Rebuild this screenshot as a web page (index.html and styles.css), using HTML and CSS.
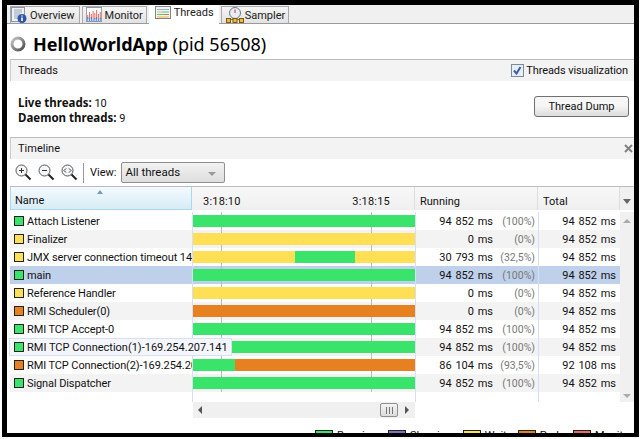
FILE: index.html
```html
<!DOCTYPE html>
<html>

<head>
    <meta charset="utf-8">
    <title>HelloWorldApp - Threads</title>
    <link rel="stylesheet" href="styles.css">
</head>

<body>
<div class="frame">
    <div class="tabs">
        <div class="tab">
            <svg width="16" height="16" viewBox="0 0 16 16"><rect x="0.5" y="0.5" width="13" height="14" fill="#eef1f5" stroke="#8d99a8"/><path d="M3 3h8M3 5h8M3 7h6M3 9h4M3 11h4" stroke="#9aa6b5"/><circle cx="11" cy="11.5" r="4.5" fill="#2f55a8"/><path d="M11 8.5v1M11 10.5v3.5" stroke="#fff" stroke-width="1.6"/></svg>
            Overview
        </div>
        <div class="tab">
            <svg width="16" height="16" viewBox="0 0 18 16" preserveAspectRatio="none"><rect x="0.5" y="0.5" width="17" height="14" fill="#fff" stroke="#8d99a8"/><path d="M2 12V8M4 12V5M6 12V7M8 12V4M10 12V6M12 12V3M14 12V7M16 12V5" stroke="#e0605a"/><path d="M2 14v-4M4 14v-3M6 14v-4M8 14v-2M10 14v-3M12 14v-4M14 14v-2M16 14v-3" stroke="#3f78d0"/></svg>
            Monitor
        </div>
        <div class="tab tab-active">
            <svg width="16" height="14" viewBox="0 0 16 14"><rect x="0.5" y="0.5" width="15" height="12" fill="#f4f4f4" stroke="#7c8590"/><path d="M2 3.5h12" stroke="#8fb3d9"/><path d="M2 6h5" stroke="#e9b13c"/><path d="M7 6h7" stroke="#58c46c"/><path d="M2 8.500h7" stroke="#58c46c"/><path d="M9 8.500h5" stroke="#d9773a"/><path d="M2 11h12" stroke="#e9b13c"/></svg>
            Threads
        </div>
        <div class="tab tab-sampler">
            <svg width="18" height="16" viewBox="0 0 18 16"><circle cx="9" cy="6" r="5.500" fill="#e8edf2" stroke="#6d7680"/><path d="M9 2.500V6" stroke="#c33" stroke-width="1"/><path d="M1 12.500h16" stroke="#8a6a1c"/><rect x="0.500" y="11.500" width="4" height="4" fill="#f0b840" stroke="#7a5a10"/><rect x="7" y="11.500" width="4" height="4" fill="#f0b840" stroke="#7a5a10"/><rect x="13.500" y="11.500" width="4" height="4" fill="#f0b840" stroke="#7a5a10"/></svg>
            Sampler
        </div>
    </div>

    <div class="title">
        <svg width="16" height="16" viewBox="0 0 16 16"><defs><linearGradient id="ring" x1="0" y1="0" x2="1" y2="1"><stop offset="0" stop-color="#c9c9c9"/><stop offset="1" stop-color="#4a4a4a"/></linearGradient></defs><circle cx="8" cy="8" r="6" fill="none" stroke="url(#ring)" stroke-width="3"/></svg>
        <h1><b>HelloWorldApp</b> (pid 56508)</h1>
    </div>

    <div class="section-head">
        <span>Threads</span>
        <label class="viz">
            <svg width="13" height="13" viewBox="0 0 13 13"><rect x="0.500" y="0.500" width="12" height="12" fill="#e8eef6" stroke="#7f8a96"/><path d="M3 6.500l2.500 3L9.500 3" fill="none" stroke="#3b5fa8" stroke-width="2"/></svg>
            Threads visualization
        </label>
    </div>

    <div class="info">
        <div class="counts">
            <div><b>Live threads:</b> 10</div>
            <div><b>Daemon threads:</b> 9</div>
        </div>
        <button class="dump">Thread Dump</button>
    </div>

    <div class="section-head timeline-head">
        <span>Timeline</span>
        <svg width="9" height="9" viewBox="0 0 9 9"><path d="M1 1l7 7M8 1L1 8" stroke="#808080" stroke-width="2"/></svg>
    </div>

    <div class="toolbar">
        <svg class="zoom" width="17" height="17" viewBox="0 0 17 17"><circle cx="6.500" cy="6.500" r="5.500" fill="#f4f6f8" stroke="#555"/><path d="M4 6.500h5M6.500 4v5" stroke="#333"/><path d="M10.500 10.500l5 5" stroke="#222" stroke-width="2"/></svg>
        <svg class="zoom" width="17" height="17" viewBox="0 0 17 17"><circle cx="6.500" cy="6.500" r="5.500" fill="#f4f6f8" stroke="#555"/><path d="M4 6.500h5" stroke="#333"/><path d="M10.500 10.500l5 5" stroke="#222" stroke-width="2"/></svg>
        <svg class="zoom" width="17" height="17" viewBox="0 0 17 17"><circle cx="6.500" cy="6.500" r="5.500" fill="#f4f6f8" stroke="#555"/><path d="M5 4.500l-2 2 2 2M8 4.500l2 2-2 2" fill="none" stroke="#333"/><path d="M10.500 10.500l5 5" stroke="#222" stroke-width="2"/></svg>
        <span class="sep"></span>
        <span class="view-label">View:</span>
        <div class="combo">All threads<span class="combo-arrow"></span></div>
    </div>

    <div class="table-head">
        <div class="th th-name"><span class="sort"></span>Name</div>
        <div class="th th-time"><span>3:18:10</span><span>3:18:15</span></div>
        <div class="th">Running</div>
        <div class="th">Total</div>
        <div class="th th-corner"><span class="corner-arrow"></span></div>
    </div>

    <div class="table-body">
        <div class="rows">
            <div class="row">
                <div class="name"><i class="sw running"></i>Attach Listener</div>
                <div class="time"><div class="bar"><i class="running fill"></i></div></div>
                <div class="num"><span>94 852 ms</span><em>(100%)</em></div>
                <div class="total">94 852 ms</div>
            </div>
            <div class="row">
                <div class="name"><i class="sw wait"></i>Finalizer</div>
                <div class="time"><div class="bar"><i class="wait fill"></i></div></div>
                <div class="num"><span>0 ms</span><em>(0%)</em></div>
                <div class="total">94 852 ms</div>
            </div>
            <div class="row">
                <div class="name"><i class="sw wait"></i>JMX server connection timeout 14</div>
                <div class="time"><div class="bar"><i class="wait" style="width:102px"></i><i class="running" style="width:60px"></i><i class="wait fill"></i></div></div>
                <div class="num"><span>30 793 ms</span><em>(32,5%)</em></div>
                <div class="total">94 852 ms</div>
            </div>
            <div class="row selected">
                <div class="name"><i class="sw running"></i>main</div>
                <div class="time"><div class="bar"><i class="running fill"></i></div></div>
                <div class="num"><span>94 852 ms</span><em>(100%)</em></div>
                <div class="total">94 852 ms</div>
            </div>
            <div class="row">
                <div class="name"><i class="sw wait"></i>Reference Handler</div>
                <div class="time"><div class="bar"><i class="wait fill"></i></div></div>
                <div class="num"><span>0 ms</span><em>(0%)</em></div>
                <div class="total">94 852 ms</div>
            </div>
            <div class="row">
                <div class="name"><i class="sw park"></i>RMI Scheduler(0)</div>
                <div class="time"><div class="bar"><i class="park fill"></i></div></div>
                <div class="num"><span>0 ms</span><em>(0%)</em></div>
                <div class="total">94 852 ms</div>
            </div>
            <div class="row">
                <div class="name"><i class="sw running"></i>RMI TCP Accept-0</div>
                <div class="time"><div class="bar"><i class="running fill"></i></div></div>
                <div class="num"><span>94 852 ms</span><em>(100%)</em></div>
                <div class="total">94 852 ms</div>
            </div>
            <div class="row">
                <div class="name"></div>
                <div class="time"><div class="bar"><i class="running fill"></i></div></div>
                <div class="num"><span>94 852 ms</span><em>(100%)</em></div>
                <div class="total">94 852 ms</div>
                <div class="tooltip"><i class="sw running"></i>RMI TCP Connection(1)-169.254.207.141</div>
            </div>
            <div class="row">
                <div class="name"><i class="sw park"></i>RMI TCP Connection(2)-169.254.207.141</div>
                <div class="time"><div class="bar"><i class="running" style="width:42px"></i><i class="park fill"></i></div></div>
                <div class="num"><span>86 104 ms</span><em>(93,5%)</em></div>
                <div class="total">92 108 ms</div>
            </div>
            <div class="row">
                <div class="name"><i class="sw running"></i>Signal Dispatcher</div>
                <div class="time"><div class="bar"><i class="running fill"></i></div></div>
                <div class="num"><span>94 852 ms</span><em>(100%)</em></div>
                <div class="total">94 852 ms</div>
            </div>
            <div class="row filler">
                <div class="name"></div>
                <div class="time blank"></div>
                <div class="num"></div>
                <div class="total"></div>
            </div>
        </div>
        <div class="vscroll">
            <span class="arrow-up"></span>
            <span class="arrow-down"></span>
        </div>
    </div>

    <div class="hscroll">
        <span class="arrow-left"></span>
        <span class="thumb"></span>
        <span class="arrow-right"></span>
    </div>

    <div class="legend">
        <span><i class="key running"></i>Running</span>
        <span><i class="key sleeping"></i>Sleeping</span>
        <span><i class="key wait"></i>Wait</span>
        <span><i class="key park"></i>Park</span>
        <span><i class="key monitor"></i>Monitor</span>
    </div>
</div>
</body>

</html>
```

FILE: styles.css
```css
html, body {
  margin: 0;
  background: #fff;
}

body {
  font-family: Roboto, "Noto Sans", sans-serif;
  font-size: 11px;
  color: #111;
}

/* The thick black outline around the window */
.frame {
  width: 627px;
  height: 428px;
  margin-left: 2px;
  border: solid #000;
  border-width: 5px 5px 4px 5px;
  background: #fff;
  overflow: hidden;
}

/* Tabs */
.tabs {
  display: flex;
  height: 18px;
  padding-left: 3px;
  gap: 2px;
  background: #f0f0f0;
  border-bottom: 1px solid #999;
}

.tab {
  display: flex;
  align-items: center;
  gap: 3px;
  margin-top: 1px;
  padding: 0 3px;
  background: linear-gradient(#f5f5f5, #e2e2e2);
  border: 1px solid #aaa;
  border-bottom: 0;
  color: #222;
}

.tab:first-child {
  padding: 0 4px 0 0;
}

.tab-active {
  position: relative;
  z-index: 1;
  margin-top: 0;
  height: 19px;
  align-items: flex-start;
  padding: 1px 5px 0 6px;
  background: #fff;
  border: 0;
}

.tab-sampler {
  gap: 1px;
  padding-left: 4px;
}

/* Title */
.title {
  display: flex;
  align-items: center;
  gap: 7px;
  height: 31px;
  padding: 4px 0 0 3px;
}

.title h1 {
  margin: 0;
  font-family: "Noto Sans", sans-serif;
  font-size: 18px;
  font-weight: normal;
  color: #000;
}

/* Section headers */
.section-head {
  display: flex;
  align-items: center;
  justify-content: space-between;
  height: 21px;
  margin-left: 3px;
  padding: 0 6px 0 7px;
  background: #f3f3f3;
  border-top: 1px solid #bbb;
  border-left: 1px solid #ccc;
}

.viz {
  display: flex;
  align-items: center;
  gap: 2px;
  letter-spacing: -0.1px;
}

.timeline-head {
  padding-right: 1px;
}

/* Counters and button */
.info {
  display: flex;
  justify-content: space-between;
  align-items: flex-start;
  height: 41px;
  padding: 15px 5px 0 11px;
}

.counts {
  line-height: 14px;
}

.counts b {
  font-family: "Noto Sans", sans-serif;
  font-size: 11.5px;
}

.dump {
  width: 95px;
  height: 21px;
  padding: 0;
  font: inherit;
  color: #111;
  background: linear-gradient(#f6f6f6 45%, #dcdcdc);
  border: 1px solid #707070;
  border-radius: 3px;
}

/* Toolbar */
.toolbar {
  display: flex;
  align-items: center;
  height: 27px;
  padding-left: 8px;
}

.zoom {
  margin-right: 6px;
}

.sep {
  width: 1px;
  height: 20px;
  margin: 0 6px 0 -1px;
  background: #999;
}

.view-label {
  margin-right: 5px;
}

.combo {
  position: relative;
  width: 99px;
  height: 19px;
  padding-left: 3px;
  line-height: 18px;
  background: linear-gradient(#f2f2f2, #dedede);
  border: 1px solid #8e8f8f;
  border-radius: 2px;
  font-size: 11.5px;
}

.combo-arrow {
  position: absolute;
  right: 8px;
  top: 9px;
  border: 4px solid transparent;
  border-top: 4px solid #999;
}

/* Table */
.table-head {
  display: grid;
  grid-template-columns: 182px 223px 123px 82px 14px;
  height: 23px;
  margin: 0 0 2px 3px;
  border-top: 1px solid #bbb;
}

.th {
  display: flex;
  align-items: flex-end;
  padding: 0 0 2px 5px;
  background: linear-gradient(#f8f8f8, #efefef);
  border-right: 1px solid #ddd;
}

.th-name {
  position: relative;
  padding-left: 4px;
  background: linear-gradient(#f3fafe, #d7ecf7);
  border: 1px solid #a9d8ef;
  border-top: 0;
  box-sizing: border-box;
}

.sort {
  position: absolute;
  left: 86px;
  top: 3px;
  border: 3px solid transparent;
  border-top: 0;
  border-bottom: 4px solid #6f9cc0;
}

.th-time {
  justify-content: space-between;
  padding: 0 24px 2px 11px;
  letter-spacing: 0.2px;
}

.th-corner {
  padding: 0;
  background: #f0f0f0;
  border-right: 0;
}

.corner-arrow {
  margin: 0 0 6px 3px;
  border: 4px solid transparent;
  border-bottom: 0;
  border-top: 5px solid #666;
}

.table-body {
  display: flex;
  margin-left: 3px;
}

.row {
  position: relative;
  display: grid;
  grid-template-columns: 182px 223px 123px 82px;
  grid-template-rows: 18px;
  height: 18px;
  line-height: 20px;
}

.row:nth-child(even) {
  background: #f3f3f3;
}

.row.selected {
  background: #bfd0ea;
}

.row.filler {
  grid-template-rows: 10px;
  height: 10px;
  background: #fff;
}

.name {
  padding-left: 4px;
  overflow: hidden;
  white-space: nowrap;
  letter-spacing: -0.1px;
}

.sw {
  display: inline-block;
  box-sizing: border-box;
  width: 10px;
  height: 10px;
  margin-right: 3px;
  vertical-align: -1px;
  border: 1px solid #222;
}

.time, .num, .total {
  box-sizing: border-box;
  border-left: 1px solid #d5dff5;
}

/* gridlines of the timeline, they show between the bars */
.time {
  padding: 3px 0;
  background:
    linear-gradient(#bbb, #bbb) no-repeat 28px 0 / 1px 100%,
    linear-gradient(#bbb, #bbb) no-repeat 178px 0 / 1px 100%;
}

.time.blank {
  background: none;
}

.bar {
  display: flex;
  height: 12px;
}

.bar i {
  display: block;
}

.bar .fill {
  flex: 1;
}

.num {
  display: flex;
  justify-content: flex-end;
  padding-right: 3px;
  word-spacing: 1px;
}

.num em {
  width: 42px;
  font-style: normal;
  font-size: 10.5px;
  color: #777;
  text-align: right;
}

.total {
  padding-right: 4px;
  text-align: right;
  word-spacing: 1px;
}

.tooltip {
  position: absolute;
  left: -1px;
  top: 0;
  z-index: 2;
  box-sizing: border-box;
  width: 223px;
  height: 18px;
  padding-left: 4px;
  line-height: 18px;
  white-space: nowrap;
  background: #f4f6fc;
  border: 1px solid #d5dff5;
}

.running { background: #3ae36a; }
.wait { background: #ffdf55; }
.park { background: #e68020; }
.sleeping { background: #8272c8; }
.monitor { background: #f06860; }

.vscroll {
  display: flex;
  flex-direction: column;
  justify-content: space-between;
  align-items: center;
  width: 14px;
  padding: 7px 0 4px;
  box-sizing: border-box;
  background: #f0f0f0;
}

.arrow-up {
  border: 4px solid transparent;
  border-top: 0;
  border-bottom: 4px solid #aaa;
}

.arrow-down {
  border: 4px solid transparent;
  border-bottom: 0;
  border-top: 4px solid #aaa;
}

.hscroll {
  display: flex;
  align-items: center;
  width: 222px;
  height: 16px;
  margin-left: 186px;
  padding: 0 6px 0 5px;
  box-sizing: border-box;
  background: #f0f0f0;
}

.arrow-left {
  border: 4px solid transparent;
  border-left: 0;
  border-right: 4px solid #555;
}

.thumb {
  width: 18px;
  height: 14px;
  margin: 0 7px 0 auto;
  box-sizing: border-box;
  background: repeating-linear-gradient(90deg, #777 0 1px, #e8e8e8 1px 3px) no-repeat center / 7px 7px, linear-gradient(#f4f4f4, #dcdcdc);
  border: 1px solid #8e8f8f;
  border-radius: 2px;
}

.arrow-right {
  border: 4px solid transparent;
  border-right: 0;
  border-left: 4px solid #555;
}

/* Legend, the window cuts it off */
.legend {
  display: flex;
  justify-content: flex-end;
  gap: 11px;
  margin-top: 11px;
  padding-right: 1px;
}

.legend span {
  display: flex;
  gap: 4px;
  line-height: 14px;
}

.key {
  display: block;
  box-sizing: border-box;
  width: 18px;
  height: 12px;
  margin-top: 1px;
  border: 1px solid #222;
}
```
